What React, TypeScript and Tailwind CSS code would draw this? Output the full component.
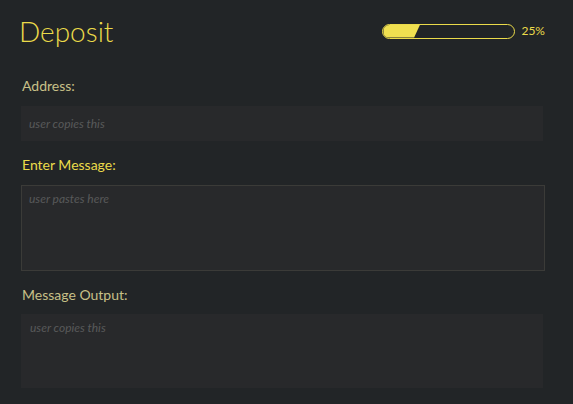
export default function App() {
  const progress = 28

  return (
    <div className="min-h-[404px] w-full bg-[#222527] px-[21px] pt-[12px] pb-4 font-['Lato','Liberation_Sans',sans-serif]">
      {/* header */}
      <div className="flex items-center justify-between">
        <h1 className="-ml-[2px] text-[28px] font-light leading-[38px] text-[#ebdb4a]">Deposit</h1>
        <div className="mr-[7px] flex items-center gap-[6px]">
          <div className="h-[15px] w-[133px] overflow-hidden rounded-full border border-[#ebdb4a]">
            <div
              className="h-full bg-[#f0e050] [clip-path:polygon(0_0,100%_0,calc(100%-6px)_100%,0_100%)]"
              style={{ width: `${progress}%` }}
            />
          </div>
          <span className="text-[12px] text-[#ebdb4a]">25%</span>
        </div>
      </div>

      {/* address */}
      <label className="mt-[27px] block pl-[1px] text-[14px] leading-[18px] text-[#c8c087]">Address:</label>
      <input
        readOnly
        placeholder="user copies this"
        className="mt-[11px] block h-[35px] w-[522px] bg-[#28292b] px-[8px] text-[12px] italic text-[#cccccc] outline-none placeholder:text-[#58595a]"
      />

      {/* message */}
      <label className="mt-[15px] block pl-[1px] text-[14px] leading-[18px] text-[#ebdb4a]">Enter Message:</label>
      <textarea
        placeholder="user pastes here"
        className="mt-[11px] block h-[86px] w-[524px] resize-none border border-[#3b3b38] bg-[#28292b] px-[7px] py-[4px] text-[12px] italic text-[#cccccc] outline-none placeholder:text-[#58595a]"
      />

      {/* output */}
      <label className="mt-[15px] block pl-[1px] text-[14px] leading-[18px] text-[#c8c087]">Message Output:</label>
      <div className="mt-[10px] h-[74px] w-[522px] bg-[#28292b] px-[9px] py-[5px] text-[12px] italic text-[#58595a]">
        user copies this
      </div>
    </div>
  )
}
